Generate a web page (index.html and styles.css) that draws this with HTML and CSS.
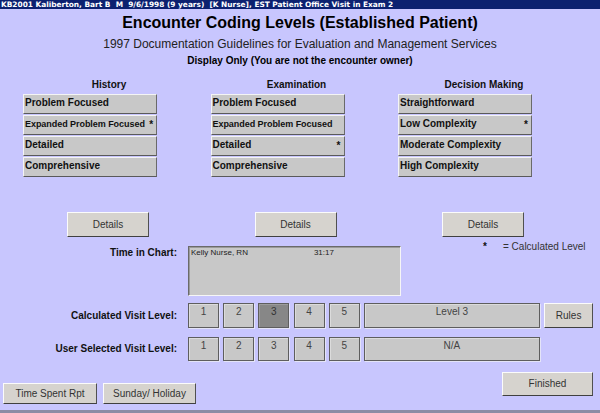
FILE: index.html
```html
<!DOCTYPE html>
<html>
<head>
<meta charset="utf-8">
<link rel="stylesheet" href="styles.css">
</head>
<body>
<div class="window">
  <div class="titlebar">KB2001 Kaliberton, Bart B&nbsp; M&nbsp; 9/6/1998 (9 years)&nbsp; [K Nurse], EST Patient Office Visit in Exam 2</div>

  <h1 class="title">Encounter Coding Levels (Established Patient)</h1>
  <div class="subtitle">1997 Documentation Guidelines for Evaluation and Management Services</div>
  <div class="notice">Display Only (You are not the encounter owner)</div>

  <div class="columns">
    <div class="col">
      <div class="col-head">History</div>
      <div class="opt">Problem Focused</div>
      <div class="opt small">Expanded Problem Focused <span class="star">*</span></div>
      <div class="opt">Detailed</div>
      <div class="opt">Comprehensive</div>
      <div class="details">Details</div>
    </div>
    <div class="col">
      <div class="col-head">Examination</div>
      <div class="opt">Problem Focused</div>
      <div class="opt small">Expanded Problem Focused</div>
      <div class="opt">Detailed <span class="star">*</span></div>
      <div class="opt">Comprehensive</div>
      <div class="details">Details</div>
    </div>
    <div class="col">
      <div class="col-head">Decision Making</div>
      <div class="opt">Straightforward</div>
      <div class="opt">Low Complexity <span class="star">*</span></div>
      <div class="opt">Moderate Complexity</div>
      <div class="opt">High Complexity</div>
      <div class="details">Details</div>
    </div>
  </div>

  <div class="time-row">
    <div class="label">Time in Chart:</div>
    <div class="time-box">
      <span class="who">Kelly Nurse, RN</span>
      <span class="dur">31:17</span>
    </div>
    <div class="legend"><span class="legend-star">*</span><span>= Calculated Level</span></div>
  </div>

  <div class="level-row first">
    <div class="label">Calculated Visit Level:</div>
    <div class="lvl">1</div>
    <div class="lvl">2</div>
    <div class="lvl on">3</div>
    <div class="lvl">4</div>
    <div class="lvl">5</div>
    <div class="lvl wide">Level 3</div>
    <div class="btn rules">Rules</div>
  </div>
  <div class="level-row second">
    <div class="label">User Selected Visit Level:</div>
    <div class="lvl">1</div>
    <div class="lvl">2</div>
    <div class="lvl">3</div>
    <div class="lvl">4</div>
    <div class="lvl">5</div>
    <div class="lvl wide">N/A</div>
  </div>

  <div class="bottom">
    <div class="left-btns">
      <div class="btn tsr">Time Spent Rpt</div>
      <div class="btn sun">Sunday/ Holiday</div>
    </div>
    <div class="btn finished">Finished</div>
  </div>
</div>
</body>
</html>
```

FILE: styles.css
```css
html, body {
  margin: 0;
  padding: 0;
}
body {
  background: #c8c6fe;
  font-family: "Liberation Sans", Arial, sans-serif;
  color: #000;
}
.window {
  width: 600px;
  height: 413px;
  box-sizing: border-box;
  border-bottom: 3px solid #8c8ca4;
  overflow: hidden;
  display: flex;
  flex-direction: column;
}
.titlebar {
  height: 9px;
  line-height: 9px;
  background: #0c2170;
  color: #fff;
  font-family: "DejaVu Sans", Verdana, sans-serif;
  font-weight: bold;
  font-size: 7.4px;
  padding-left: 1px;
  white-space: nowrap;
  overflow: hidden;
}
.title {
  margin: 5px 0 0 0;
  font-size: 16px;
  line-height: 18px;
  font-weight: bold;
  text-align: center;
}
.subtitle {
  margin-top: 5px;
  font-size: 12px;
  line-height: 14px;
  text-align: center;
  color: #222;
}
.notice {
  margin-top: 4px;
  font-size: 10px;
  line-height: 12px;
  font-weight: bold;
  text-align: center;
}
.columns {
  display: flex;
  gap: 53.5px;
  padding-left: 23px;
  margin-top: 12px;
}
.col {
  width: 134px;
  display: flex;
  flex-direction: column;
  gap: 1px;
}
.col-head {
  font-size: 10px;
  line-height: 12px;
  font-weight: bold;
  text-align: center;
  padding-left: 38px;
  margin-bottom: 2px;
  color: #111;
}
.opt {
  height: 20px;
  box-sizing: border-box;
  background: #c8c8c8;
  border: 1px solid;
  border-color: #f4f4f4 #6a6a6a #5a5a5a #f4f4f4;
  font-size: 10px;
  line-height: 12px;
  font-weight: bold;
  padding: 2px 3px 0 1px;
  display: flex;
  justify-content: space-between;
  white-space: nowrap;
  color: #111;
}
.opt.small {
  font-size: 9px;
  letter-spacing: -0.05px;
}
.star {
  font-size: 10px;
  padding-top: 1px;
}
.details {
  margin-top: 34px;
  margin-left: 44px;
  width: 82px;
  height: 25px;
  box-sizing: border-box;
  background: #d6d3ce;
  border: 1px solid;
  border-color: #fbfbfb #505050 #404040 #fbfbfb;
  font-size: 10px;
  line-height: 23px;
  text-align: center;
  color: #333;
}
.time-row {
  display: flex;
  align-items: flex-start;
  margin-top: 9px;
}
.label {
  width: 177px;
  flex: none;
  text-align: right;
  font-size: 10px;
  line-height: 12px;
  font-weight: bold;
  color: #111;
  margin-right: 11px;
}
.time-row .label {
  padding-top: 1px;
}
.time-box {
  width: 213px;
  height: 50px;
  box-sizing: border-box;
  background: #c8c8c8;
  border: 1px solid;
  border-color: #6a6a6a #f6f6f6 #f6f6f6 #6a6a6a;
  box-shadow: inset 1px 1px 0 #9a9a9a;
  font-size: 8px;
  line-height: 10px;
  color: #222;
  padding: 1px 0 0 2px;
  display: flex;
}
.time-box .dur {
  margin-left: 66px;
}
.legend {
  margin-left: 82px;
  margin-top: -5px;
  font-size: 10px;
  line-height: 12px;
  color: #333;
  display: flex;
}
.legend-star {
  font-weight: bold;
  color: #111;
  width: 20px;
}
.level-row {
  display: flex;
  align-items: center;
  gap: 4.2px;
}
.level-row .label {
  margin-right: 6.8px;
}
.level-row.first {
  margin-top: 7px;
}
.level-row.second {
  margin-top: 9px;
}
.lvl {
  width: 31px;
  height: 25px;
  box-sizing: border-box;
  background: #c8c8c8;
  border: 1px solid #5e5e5e;
  box-shadow: inset 1px 1px 0 #dcdcdc, 1px 1px 0 #e4e4f8;
  font-size: 10px;
  line-height: 12px;
  padding-top: 2px;
  text-align: center;
  color: #444;
}
.lvl.on {
  background: #878787;
  box-shadow: inset 1px 1px 0 #9c9c9c, 1px 1px 0 #e4e4f8;
  color: #333;
}
.lvl.wide {
  width: 176px;
}
.level-row.second .lvl {
  height: 24px;
}
.btn {
  box-sizing: border-box;
  background: #d6d3ce;
  border: 1px solid;
  border-color: #fbfbfb #505050 #404040 #fbfbfb;
  font-size: 10px;
  text-align: center;
  color: #333;
}
.rules {
  width: 49px;
  height: 25px;
  line-height: 23px;
}
.bottom {
  display: flex;
  justify-content: space-between;
  align-items: flex-end;
  padding: 0 7px 6px 3px;
  margin-top: auto;
}
.left-btns {
  display: flex;
  gap: 6px;
}
.tsr {
  width: 94px;
  height: 21px;
  line-height: 19px;
}
.sun {
  width: 93px;
  height: 21px;
  line-height: 19px;
}
.finished {
  width: 91px;
  height: 24px;
  line-height: 22px;
  margin-bottom: 8px;
}
```
